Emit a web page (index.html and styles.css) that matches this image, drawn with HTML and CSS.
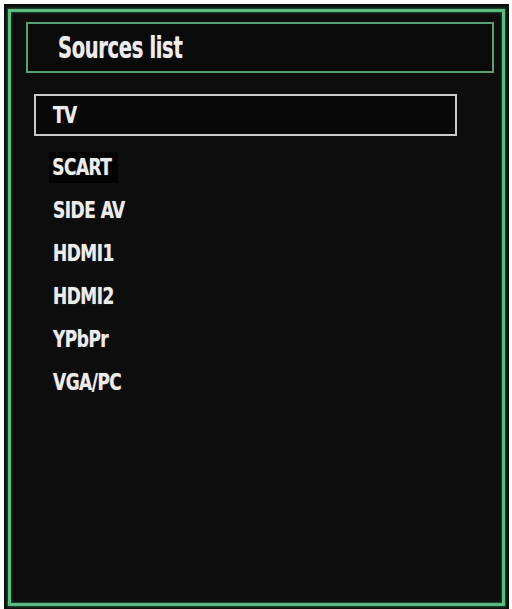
FILE: index.html
```html
<!DOCTYPE html>
<html>
<head>
<meta charset="utf-8">
<link rel="stylesheet" href="styles.css">
</head>
<body>
<div class="panel">
  <div class="frame">
    <div class="title-box"><span class="title">Sources list</span></div>
    <div class="selected"><span class="item-text">TV</span></div>
    <ul class="list">
      <li class="item"><span class="item-text dark">SCART</span></li>
      <li class="item"><span class="item-text">SIDE AV</span></li>
      <li class="item"><span class="item-text">HDMI1</span></li>
      <li class="item"><span class="item-text">HDMI2</span></li>
      <li class="item"><span class="item-text">YPbPr</span></li>
      <li class="item"><span class="item-text">VGA/PC</span></li>
    </ul>
  </div>
</div>
</body>
</html>
```
FILE: styles.css
```css
html, body {
  margin: 0;
  padding: 0;
  background: #ffffff;
}
body {
  font-family: "DejaVu Sans Condensed", "DejaVu Sans", sans-serif;
  font-weight: bold;
  color: #ececec;
}
.panel {
  margin: 4px 3px 0 4px;
  height: 605px;
  background: #0d0d0d;
  padding: 5px 4px 3px 4px;
  box-sizing: border-box;
}
.frame {
  height: 100%;
  box-sizing: border-box;
  border: 3px solid #5dbb84;
  box-shadow: 0 0 2px 1px #1d5a33, inset 0 0 2px 1px #1d4a2c;
  padding: 10px 8px 0 15px;
}
.title-box {
  height: 51px;
  box-sizing: border-box;
  border: 2px solid #5a9e74;
  display: flex;
  align-items: center;
  padding-left: 30px;
  background: #0a0a0a;
}
.title {
  display: inline-block;
  font-size: 31px;
  line-height: 1;
  letter-spacing: -0.5px;
  transform: scaleX(0.7);
  transform-origin: left center;
  text-shadow: 0 0 1px rgba(255,255,255,0.5);
}
.selected {
  margin: 21px 0 0 8px;
  width: 423px;
  height: 42px;
  box-sizing: border-box;
  border: 2px solid #c9c9c9;
  display: flex;
  align-items: center;
  padding-left: 17px;
  background: #080808;
}
.item-text {
  display: inline-block;
  font-size: 23px;
  line-height: 1;
  letter-spacing: -0.6px;
  transform: scaleX(0.82);
  transform-origin: left center;
  text-shadow: 0 0 1px rgba(255,255,255,0.5);
}
.list {
  list-style: none;
  margin: 0;
  padding: 10px 0 0 27px;
}
.item {
  height: 43px;
  display: flex;
  align-items: center;
}
.dark {
  background: #030303;
  padding: 4px 8px 4px 4px;
  margin-left: -4px;
}
```
